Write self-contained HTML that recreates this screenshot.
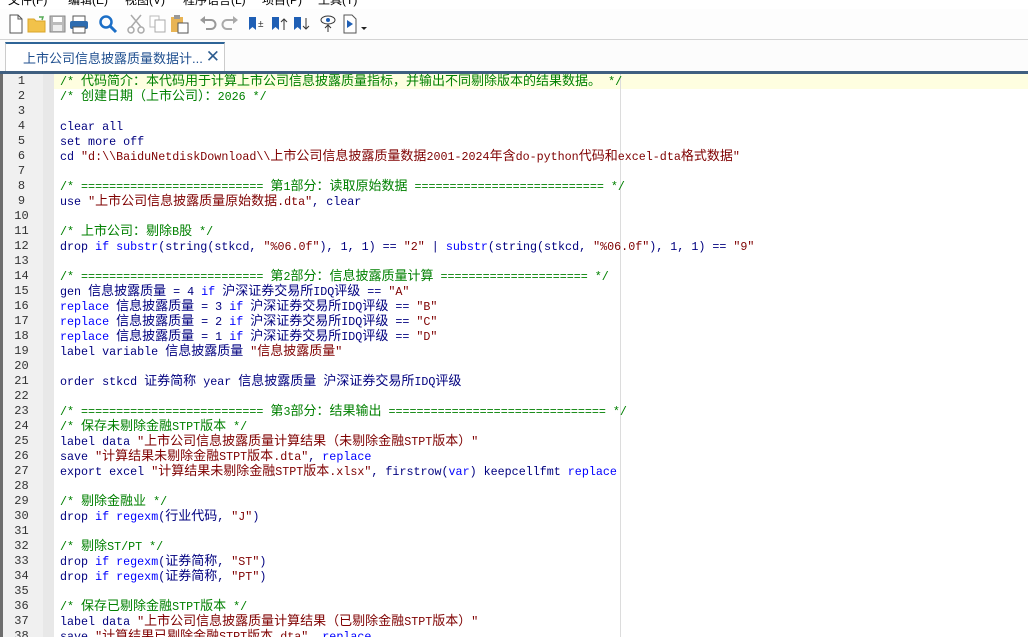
<!DOCTYPE html>
<html><head><meta charset="utf-8"><style>
html,body{margin:0;width:1028px;height:637px;overflow:hidden}
body{background:#fff;position:relative;font-family:"Liberation Sans","Noto Sans CJK SC",sans-serif}
.menu{position:absolute;top:-9px;left:0;height:16px;font-size:12px;color:#000}
.menu span{position:absolute;white-space:nowrap}
.tb{position:absolute;top:9px;left:0;width:1028px;height:30px;background:#fdfdfd;border-bottom:1px solid #d4d4d4}
.tb svg{position:absolute;top:5px}
.tabs{position:absolute;top:40px;left:0;width:1028px;height:31px;background:#fcfcfc}
.tab{position:absolute;left:5px;top:2px;width:220px;height:29px;background:#fff;border-top:2px solid #2e6497;border-left:1px solid #ccc;border-right:1px solid #ccc;box-sizing:border-box;font-size:13px;color:#1f4f8f}
.tab .t{position:absolute;left:17px;top:4px}
.tab .x{position:absolute;right:4px;top:3px;font-size:17px;color:#2e5d90}
.bar{position:absolute;top:71px;left:0;width:1028px;height:3px;background:#3f5f80}
.ed{position:absolute;top:74px;left:0;width:1028px;height:563px;overflow:hidden}
.gut{position:absolute;left:0;top:0;width:43px;height:563px;background:#f0f0f0;border-left:3px solid #6d6d6d;box-sizing:border-box}
.fold{position:absolute;left:43px;top:0;width:11px;height:563px;background:#e8e8e8}
.hl{position:absolute;left:54px;top:0;width:974px;height:15px;background:#fefee0}
.edge{position:absolute;left:620px;top:0;width:1px;height:563px;background:#dcdcdc}
.ln{position:absolute;left:0;top:0;width:43px;font:12px/15px "Liberation Mono",monospace;color:#333;text-align:center}
.code{position:absolute;left:60px;top:1px;font:11.7px/15px "Liberation Mono","Noto Sans CJK SC",monospace;color:#00007f}
.code div{height:15px;white-space:pre;overflow:visible}
.cj{font-size:13px;font-family:"Noto Sans CJK SC","WenQuanYi Zen Hei",sans-serif;line-height:15px;display:inline-block;height:15px;vertical-align:top;position:relative;top:-3px}
.c{color:#008000}.s{color:#7f0000}.k{color:#0000ff}
</style></head><body>
<div class="menu"><span style="left:8px">文件(F)</span><span style="left:68px">编辑(E)</span><span style="left:125px">视图(V)</span><span style="left:183px">程序语言(L)</span><span style="left:262px">项目(P)</span><span style="left:318px">工具(T)</span></div>
<div class="tb">
<svg style="left:8px" width="16" height="20"><path d="M2 1h8l4 4v14H2z" fill="#fff" stroke="#555"/><path d="M10 1v4h4" fill="none" stroke="#555"/></svg>
<svg style="left:27px" width="20" height="20"><path d="M1 5h6l2 2h9v11H1z" fill="#f2c24a" stroke="#d9a52a"/><path d="M12 3l4 0-1 3" stroke="#5a5" fill="none" stroke-width="1.5"/></svg>
<svg style="left:49px" width="17" height="20"><rect x="1" y="2" width="15" height="16" fill="#bbb" stroke="#888"/><rect x="4" y="3" width="9" height="5" fill="#fff"/><rect x="4" y="11" width="9" height="6" fill="#eee"/></svg>
<svg style="left:69px" width="20" height="20"><rect x="4" y="2" width="12" height="6" fill="#fff" stroke="#555"/><rect x="1" y="7" width="18" height="8" rx="2" fill="#2d6cb0"/><rect x="4" y="13" width="12" height="6" fill="#fff" stroke="#555"/></svg>
<svg style="left:98px" width="20" height="20"><circle cx="8" cy="8" r="5.5" fill="none" stroke="#1c6fc7" stroke-width="2.5"/><path d="M12 12l6 6" stroke="#1c6fc7" stroke-width="3"/></svg>
<svg style="left:127px" width="18" height="20"><path d="M4 1l10 12M14 1L4 13" stroke="#aaa" stroke-width="1.5"/><circle cx="4" cy="16" r="3" fill="none" stroke="#aaa" stroke-width="1.5"/><circle cx="14" cy="16" r="3" fill="none" stroke="#aaa" stroke-width="1.5"/></svg>
<svg style="left:149px" width="18" height="20"><rect x="1" y="2" width="9" height="11" fill="#fff" stroke="#bbb"/><rect x="6" y="6" width="10" height="12" fill="#fff" stroke="#aaa"/></svg>
<svg style="left:170px" width="20" height="20"><rect x="1" y="3" width="12" height="15" fill="#e8b455"/><rect x="4" y="1" width="6" height="4" fill="#999"/><rect x="8" y="9" width="10" height="10" fill="#fff" stroke="#555"/></svg>
<svg style="left:199px" width="18" height="20"><path d="M4 6h8a4 4 0 0 1 0 9H7" fill="none" stroke="#999" stroke-width="2"/><path d="M1 6l5-4v8z" fill="#999"/></svg>
<svg style="left:221px" width="18" height="20"><path d="M14 6H6a4 4 0 0 0 0 9h5" fill="none" stroke="#aaa" stroke-width="2"/><path d="M17 6l-5-4v8z" fill="#aaa"/></svg>
<svg style="left:247px" width="18" height="20"><path d="M2 3h7v13l-3.5-3L2 16z" fill="#1f5fb5"/><text x="11" y="13" font-size="10" fill="#333">±</text></svg>
<svg style="left:270px" width="18" height="20"><path d="M2 3h7v13l-3.5-3L2 16z" fill="#1f5fb5"/><path d="M14 16V5M11 8l3-3 3 3" stroke="#333" fill="none"/></svg>
<svg style="left:292px" width="18" height="20"><path d="M2 3h7v13l-3.5-3L2 16z" fill="#1f5fb5"/><path d="M14 4v11M11 12l3 3 3-3" stroke="#333" fill="none"/></svg>
<svg style="left:319px" width="18" height="20"><ellipse cx="9" cy="6" rx="7" ry="4" fill="none" stroke="#333"/><circle cx="9" cy="6" r="2" fill="#1f5fb5"/><path d="M9 18V11M6 14l3-3 3 3" stroke="#333" fill="none"/></svg>
<svg style="left:342px" width="28" height="20"><path d="M2 1h8l4 4v14H2z" fill="#fff" stroke="#555"/><path d="M5 6l6 4-6 4z" fill="#1f5fb5"/><path d="M19 13h6l-3 3z" fill="#222"/></svg>
</div>
<div class="tabs"><div class="tab"><span class="t">上市公司信息披露质量数据计...</span><span class="x">✕</span></div></div>
<div class="bar"></div>
<div class="ed">
<div class="gut"></div><div class="fold"></div><div class="hl"></div><div class="edge"></div>
<div class="ln" id="ln"></div>
<div class="code" id="code"><div class="c">/* 代码简介：本代码用于计算上市公司信息披露质量指标，并输出不同剔除版本的结果数据。 */</div><div class="c">/* 创建日期（上市公司）：2026 */</div><div></div><div>clear all</div><div>set more off</div><div>cd <span class="s">"d:\\BaiduNetdiskDownload\\上市公司信息披露质量数据2001-2024年含do-python代码和excel-dta格式数据"</span></div><div></div><div class="c">/* ========================== 第1部分：读取原始数据 =========================== */</div><div>use <span class="s">"上市公司信息披露质量原始数据.dta"</span>, clear</div><div></div><div class="c">/* 上市公司：剔除B股 */</div><div>drop <span class="k">if</span> <span class="k">substr</span>(string(stkcd, <span class="s">"%06.0f"</span>), 1, 1) == <span class="s">"2"</span> | <span class="k">substr</span>(string(stkcd, <span class="s">"%06.0f"</span>), 1, 1) == <span class="s">"9"</span></div><div></div><div class="c">/* ========================== 第2部分：信息披露质量计算 ===================== */</div><div>gen 信息披露质量 = 4 <span class="k">if</span> 沪深证券交易所IDQ评级 == <span class="s">"A"</span></div><div><span class="k">replace</span> 信息披露质量 = 3 <span class="k">if</span> 沪深证券交易所IDQ评级 == <span class="s">"B"</span></div><div><span class="k">replace</span> 信息披露质量 = 2 <span class="k">if</span> 沪深证券交易所IDQ评级 == <span class="s">"C"</span></div><div><span class="k">replace</span> 信息披露质量 = 1 <span class="k">if</span> 沪深证券交易所IDQ评级 == <span class="s">"D"</span></div><div>label variable 信息披露质量 <span class="s">"信息披露质量"</span></div><div></div><div>order stkcd 证券简称 year 信息披露质量 沪深证券交易所IDQ评级</div><div></div><div class="c">/* ========================== 第3部分：结果输出 =============================== */</div><div class="c">/* 保存未剔除金融STPT版本 */</div><div>label data <span class="s">"上市公司信息披露质量计算结果（未剔除金融STPT版本）"</span></div><div>save <span class="s">"计算结果未剔除金融STPT版本.dta"</span>, <span class="k">replace</span></div><div>export excel <span class="s">"计算结果未剔除金融STPT版本.xlsx"</span>, firstrow(<span class="k">var</span>) keepcellfmt <span class="k">replace</span></div><div></div><div class="c">/* 剔除金融业 */</div><div>drop <span class="k">if</span> <span class="k">regexm</span>(行业代码, <span class="s">"J"</span>)</div><div></div><div class="c">/* 剔除ST/PT */</div><div>drop <span class="k">if</span> <span class="k">regexm</span>(证券简称, <span class="s">"ST"</span>)</div><div>drop <span class="k">if</span> <span class="k">regexm</span>(证券简称, <span class="s">"PT"</span>)</div><div></div><div class="c">/* 保存已剔除金融STPT版本 */</div><div>label data <span class="s">"上市公司信息披露质量计算结果（已剔除金融STPT版本）"</span></div><div>save <span class="s">"计算结果已剔除金融STPT版本.dta"</span>, <span class="k">replace</span></div></div>
</div>
<script>
var ln=document.getElementById('ln'),h='';for(var i=1;i<=38;i++)h+=i+'<br>';ln.innerHTML=h;
function walk(n){if(n.nodeType==3){var t=n.nodeValue,re=/[\u3000-\u9fff\uff00-\uffef]+/g;if(!re.test(t))return;re.lastIndex=0;var f=document.createDocumentFragment(),last=0,m;while((m=re.exec(t))){if(m.index>last)f.appendChild(document.createTextNode(t.slice(last,m.index)));var s=document.createElement('span');s.className='cj';s.textContent=m[0];f.appendChild(s);last=m.index+m[0].length;}if(last<t.length)f.appendChild(document.createTextNode(t.slice(last)));n.parentNode.replaceChild(f,n);}else{var c=Array.prototype.slice.call(n.childNodes);c.forEach(walk);}}
walk(document.getElementById('code'));
</script>
</body></html>
